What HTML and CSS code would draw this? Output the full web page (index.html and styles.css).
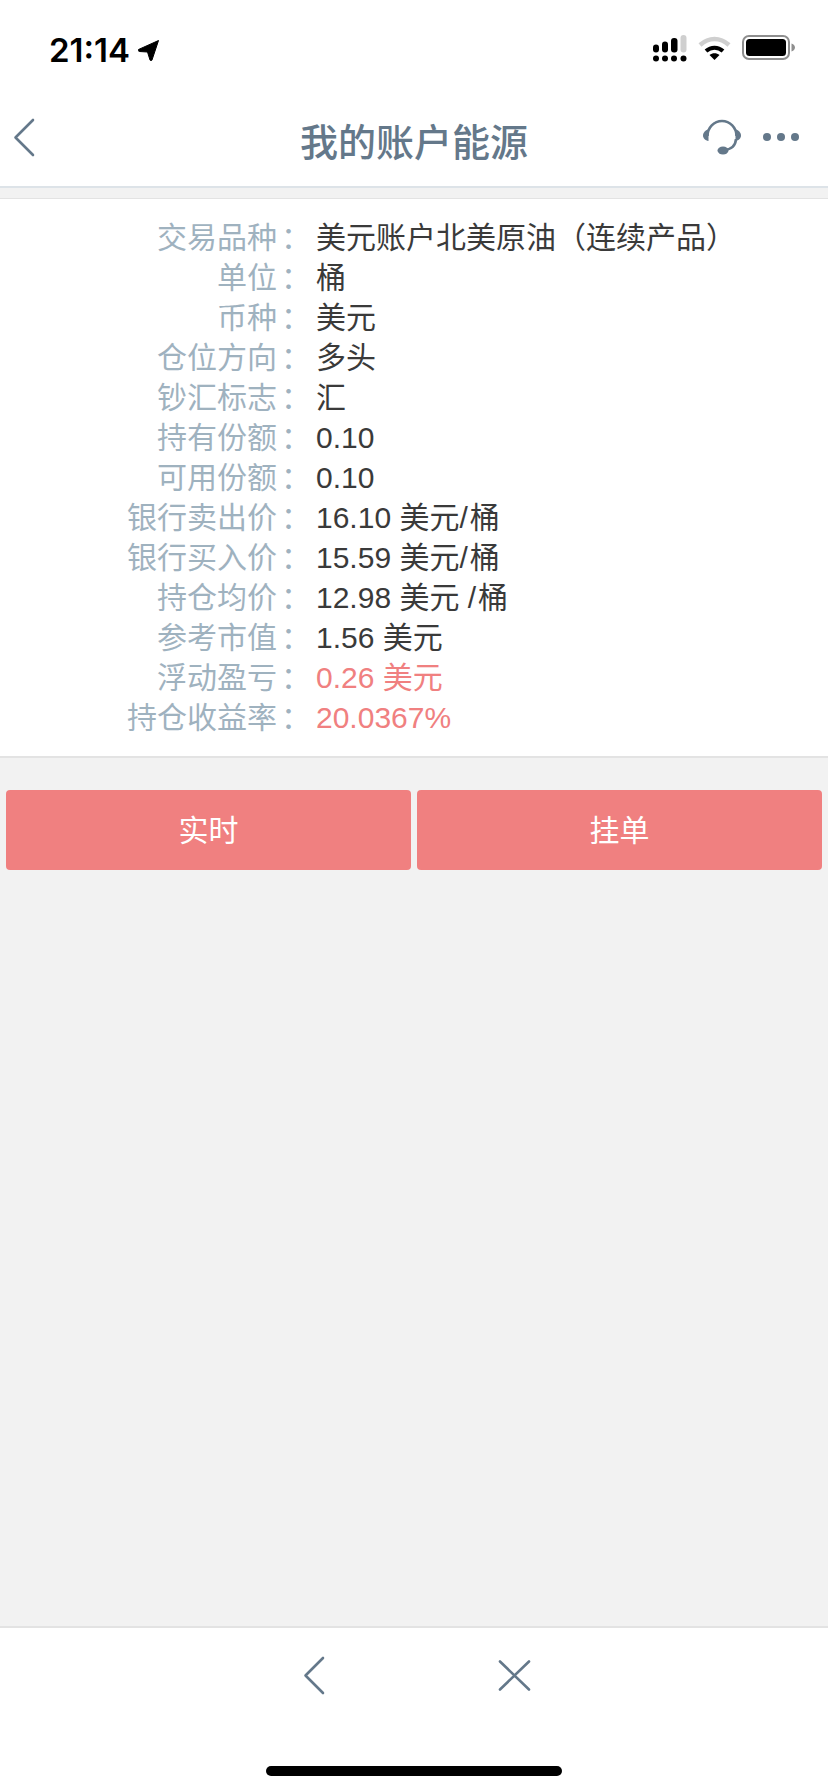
FILE: index.html
```html
<!DOCTYPE html>
<html lang="zh-CN">
<head>
    <meta charset="UTF-8">
    <meta name="viewport" content="width=device-width, initial-scale=1.0">
    <title>我的账户能源</title>
    <link rel="stylesheet" href="styles.css">
</head>
<body>
    <div class="page">
        <div class="statusbar">
            <div class="status-time">
                <span>21:14</span>
                <svg width="21" height="21" viewBox="0 0 21 21"><path d="M20.5 0.5 L0.5 9.5 C0 10.5 0.5 11.5 1.5 11.5 L9.5 12 L12 20 C12.5 21 13.5 21 14 20 Z" fill="#000" stroke="#000" stroke-linejoin="round"/></svg>
            </div>
            <div class="status-icons">
                <svg width="34" height="27" viewBox="0 0 34 27">
                    <g fill="#000">
                        <circle cx="3" cy="23.5" r="3"/><circle cx="12" cy="23.5" r="3"/><circle cx="21" cy="23.5" r="3"/><circle cx="30.5" cy="23.5" r="3"/>
                        <rect x="0" y="9.5" width="6" height="8" rx="3"/>
                        <rect x="9" y="6.5" width="6" height="11" rx="3"/>
                        <rect x="18" y="3" width="6.5" height="14.5" rx="3"/>
                    </g>
                    <rect x="27.5" y="0" width="6" height="17.5" rx="3" fill="#cfcfcf"/>
                </svg>
                <svg width="33" height="25" viewBox="0 0 33 25">
                    <path d="M2 10 C11 2 22 2 31 10" fill="none" stroke="#cfcfcf" stroke-width="4.5"/>
                    <path d="M8 16 C13 11.5 20 11.5 25 16" fill="none" stroke="#000" stroke-width="4"/>
                    <path d="M11.5 20 C14.5 17.5 18.5 17.5 21.5 20 L16.5 25 Z" fill="#000"/>
                </svg>
                <svg width="53" height="25" viewBox="0 0 53 25">
                    <rect x="1" y="1" width="46" height="23" rx="6" fill="none" stroke="#8e8e8e" stroke-width="2"/>
                    <rect x="4" y="4" width="40" height="17" rx="3.5" fill="#000"/>
                    <path d="M49.5 8.5 C52 9.5 53 11 53 12.5 C53 14 52 15.5 49.5 16.5 Z" fill="#8e8e8e"/>
                </svg>
            </div>
        </div>

        <div class="navbar">
            <div class="nav-left">
                <svg width="22" height="39" viewBox="0 0 22 39"><path d="M20 2 L2.5 19.5 L20 37" fill="none" stroke="#64788a" stroke-width="2.6" stroke-linecap="round" stroke-linejoin="round"/></svg>
            </div>
            <h1>我的账户能源</h1>
            <div class="nav-right">
                <svg width="38" height="36" viewBox="0 0 38 36">
                    <path d="M4.5 17 A14.5 15 0 0 1 33.5 17" fill="none" stroke="#64788a" stroke-width="2.6"/>
                    <path d="M33 20 C32.5 27 28 30.5 21 31" fill="none" stroke="#64788a" stroke-width="2.6"/>
                    <path d="M5.5 10.5 V22 C2 21.5 0 19 0 16.5 C0 14 2 11 5.5 10.5 Z" fill="#64788a"/>
                    <path d="M32.5 10.5 V22 C36 21.5 38 19 38 16.5 C38 14 36 11 32.5 10.5 Z" fill="#64788a"/>
                    <ellipse cx="20" cy="31.5" rx="5.5" ry="4" fill="#64788a"/>
                </svg>
                <div class="dots"><i></i><i></i><i></i></div>
            </div>
        </div>

        <div class="main">
            <div class="info-panel">
                <div class="info-row"><span class="info-label">交易品种<span class="colon">：</span></span><span class="info-value">美元账户北美原油（连续产品）</span></div>
                <div class="info-row"><span class="info-label">单位<span class="colon">：</span></span><span class="info-value">桶</span></div>
                <div class="info-row"><span class="info-label">币种<span class="colon">：</span></span><span class="info-value">美元</span></div>
                <div class="info-row"><span class="info-label">仓位方向<span class="colon">：</span></span><span class="info-value">多头</span></div>
                <div class="info-row"><span class="info-label">钞汇标志<span class="colon">：</span></span><span class="info-value">汇</span></div>
                <div class="info-row"><span class="info-label">持有份额<span class="colon">：</span></span><span class="info-value">0.10</span></div>
                <div class="info-row"><span class="info-label">可用份额<span class="colon">：</span></span><span class="info-value">0.10</span></div>
                <div class="info-row"><span class="info-label">银行卖出价<span class="colon">：</span></span><span class="info-value">16.10 美元<span class="wide">/</span>桶</span></div>
                <div class="info-row"><span class="info-label">银行买入价<span class="colon">：</span></span><span class="info-value">15.59 美元<span class="wide">/</span>桶</span></div>
                <div class="info-row"><span class="info-label">持仓均价<span class="colon">：</span></span><span class="info-value">12.98 美元 <span class="wide">/</span>桶</span></div>
                <div class="info-row"><span class="info-label">参考市值<span class="colon">：</span></span><span class="info-value">1.56 美元</span></div>
                <div class="info-row"><span class="info-label">浮动盈亏<span class="colon">：</span></span><span class="info-value red">0.26 美元</span></div>
                <div class="info-row"><span class="info-label">持仓收益率<span class="colon">：</span></span><span class="info-value red">20.0367<span class="wide">%</span></span></div>
            </div>
            <div class="actions">
                <button>实时</button>
                <button>挂单</button>
            </div>
        </div>

        <div class="footer">
            <div class="footer-icons">
                <div class="footer-icon">
                    <svg width="22" height="39" viewBox="0 0 22 39"><path d="M20 2 L2.5 19.5 L20 37" fill="none" stroke="#64788a" stroke-width="2.6" stroke-linecap="round" stroke-linejoin="round"/></svg>
                </div>
                <div class="footer-icon">
                    <svg width="33" height="31" viewBox="0 0 33 31"><path d="M2 1.5 L31 29.5 M31 1.5 L2 29.5" fill="none" stroke="#64788a" stroke-width="2.6" stroke-linecap="round"/></svg>
                </div>
            </div>
            <div class="home-bar"></div>
        </div>
    </div>
</body>
</html>
```

FILE: styles.css
```css
body {
    margin: 0;
    font-family: "Liberation Sans", "Noto Sans CJK SC", sans-serif;
    color: #333;
}
.page {
    display: flex;
    flex-direction: column;
    height: 1792px;
    background-color: #fff;
}
.statusbar {
    height: 88px;
    box-sizing: border-box;
    display: flex;
    justify-content: space-between;
    align-items: flex-start;
    padding: 28px 33px 0 49px;
}
.status-time {
    display: flex;
    align-items: center;
    gap: 8px;
    padding-top: 6px;
    font-family: Inter, sans-serif;
    font-size: 33px;
    font-weight: 600;
    line-height: 32px;
    color: #000;
}
.status-icons {
    display: flex;
    align-items: flex-start;
    gap: 11px;
    padding-top: 7px;
}
.navbar {
    height: 98px;
    display: grid;
    grid-template-columns: 1fr auto 1fr;
    align-items: center;
    border-bottom: 2px solid #dde3e8;
}
.navbar h1 {
    margin: 0;
    padding-top: 4px;
    font-size: 38px;
    font-weight: 500;
    color: #64788a;
}
.nav-left {
    display: flex;
    padding-left: 13px;
}
.nav-right {
    display: flex;
    justify-content: flex-end;
    align-items: center;
    gap: 22px;
    padding-right: 29px;
}
.dots {
    display: flex;
    gap: 6px;
}
.dots i {
    width: 8px;
    height: 8px;
    border-radius: 50%;
    background-color: #64788a;
}
.main {
    flex: 1;
    background-color: #f2f2f2;
    padding-top: 10px;
}
.info-panel {
    background-color: #fff;
    border-top: 1px solid #e3e3e3;
    border-bottom: 2px solid #e3e3e3;
    padding: 19px 0 18px;
}
.info-row {
    display: grid;
    grid-template-columns: 307px 1fr;
    column-gap: 9px;
    font-size: 30px;
    line-height: 40px;
}
.info-label {
    text-align: right;
    color: #9fb2bf;
}
.colon {
    display: inline-block;
    width: 30px;
    padding-left: 4px;
    box-sizing: border-box;
    text-align: left;
}
.info-value {
    color: #3a3a3a;
}
.info-value.red {
    color: #f08080;
}
.wide {
    letter-spacing: 2px;
}
.actions {
    display: grid;
    grid-template-columns: 1fr 1fr;
    gap: 6px;
    padding: 32px 6px 0;
}
.actions button {
    height: 80px;
    border: none;
    border-radius: 4px;
    padding: 0 0 4px;
    background-color: #f08080;
    color: #fff;
    font-family: inherit;
    font-size: 30px;
}
.footer {
    height: 166px;
    box-sizing: border-box;
    border-top: 2px solid #e3e3e3;
    display: flex;
    flex-direction: column;
    align-items: center;
}
.footer-icons {
    display: flex;
    height: 138px;
    align-items: center;
    padding-bottom: 44px;
    box-sizing: border-box;
}
.footer-icon {
    width: 200px;
    display: flex;
    justify-content: center;
}
.home-bar {
    width: 296px;
    height: 10px;
    border-radius: 5px;
    background-color: #000;
}
```
